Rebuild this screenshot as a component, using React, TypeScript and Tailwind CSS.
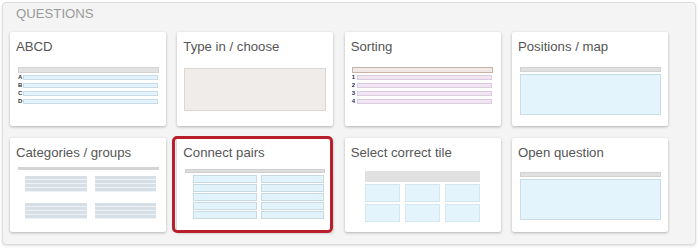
import React from "react";

const font = { fontFamily: '"Liberation Sans", Arial, sans-serif' };

function Card({ title, children, selected }: { title: string; children?: React.ReactNode; selected?: boolean }) {
  return (
    <div className="relative h-[94px] rounded-[2px] bg-white pt-[7px] shadow-[0_1px_3px_rgba(0,0,0,0.28)]">
      <div className="px-[6px] text-[13.2px] leading-[15px] text-[#555555]">{title}</div>
      {children}
      {selected && (
        <div className="pointer-events-none absolute -left-[5px] -top-[2px] right-0 -bottom-[1px] rounded-[5px] border-[3px] border-[#b81f2a]" />
      )}
    </div>
  );
}

function ListRows({ labels, fill, border, labelColor }: { labels: string[]; fill: string; border: string; labelColor: string }) {
  return (
    <div className="mt-[2px] flex flex-col gap-[3px]">
      {labels.map((l) => (
        <div key={l} className="flex h-[5px] items-center">
          <span className={`w-[5px] text-[6px] font-bold leading-[5px] ${labelColor}`}>{l}</span>
          <div className={`h-[5px] flex-1 mr-[1px] border ${fill} ${border}`} />
        </div>
      ))}
    </div>
  );
}

function Stripes() {
  return (
    <div className="flex flex-col gap-[1px] bg-[#eef2f5] pb-[1px]">
      <div className="h-[3px] bg-[#d5dfe5]" />
      <div className="h-[3px] bg-[#d5dfe5]" />
      <div className="h-[3px] bg-[#d5dfe5]" />
      <div className="h-[3px] bg-[#d5dfe5]" />
    </div>
  );
}

export default function App() {
  return (
    <div className="h-[249px] w-[700px] bg-white p-[2px]" style={font}>
      <div className="h-[243px] w-[694px] rounded-[4px] border border-[#dcdcdc] bg-[#f4f4f4] pl-[7px] pt-[3px] shadow-[0_1px_3px_rgba(0,0,0,0.12)]">
        <div className="pl-[6px] text-[13.2px] leading-[15px] text-[#9a9a9a]">QUESTIONS</div>
        <div className="mt-[11px] grid w-[658px] grid-cols-4 gap-x-[11.33px] gap-y-[12px]">
          <Card title="ABCD">
            <div className="ml-[8px] mt-[13px] w-[141px]">
              <div className="h-[6px] border border-[#d2d2d2] bg-[#e2e2e2]" />
              <ListRows labels={["A", "B", "C", "D"]} fill="bg-[#e4f2fb]" border="border-[#c6dceb]" labelColor="text-[#333333]" />
            </div>
          </Card>
          <Card title="Type in / choose">
            <div className="ml-[7px] mt-[14px] h-[43px] w-[142px] border border-[#dad7d4] bg-[#f0ece9]" />
          </Card>
          <Card title="Sorting">
            <div className="ml-[7px] mt-[13px] w-[141px]">
              <div className="h-[6px] border border-[#c9b3a8] bg-[#efe8e5]" />
              <ListRows labels={["1", "2", "3", "4"]} fill="bg-[#f1e5f3]" border="border-[#dccbe0]" labelColor="text-[#1e2a55]" />
            </div>
          </Card>
          <Card title="Positions / map">
            <div className="ml-[8px] mt-[13px] w-[141px]">
              <div className="h-[5px] border border-[#d2d2d2] bg-[#e0e0e0]" />
              <div className="mt-[2px] h-[41px] border border-[#c9dde8] bg-[#e4f4fc]" />
            </div>
          </Card>

          <Card title="Categories / groups">
            <div className="ml-[8px] mt-[7px] w-[141px]">
              <div className="h-[3px] bg-[#d4d4d4]" />
              <div className="mt-[6px] flex">
                <div className="ml-[7px] w-[62px]">
                  <Stripes />
                  <div className="mt-[11px]">
                    <Stripes />
                  </div>
                </div>
                <div className="ml-[8px] w-[61px]">
                  <Stripes />
                  <div className="mt-[11px]">
                    <Stripes />
                  </div>
                </div>
              </div>
            </div>
          </Card>
          <Card title="Connect pairs" selected>
            <div className="ml-[8px] mt-[9px] w-[140px]">
              <div className="h-[4px] border border-[#cfcfcf] bg-[#dcdcdc]" />
              <div className="mt-[2px] ml-[8px] grid grid-cols-[64px_63px] gap-x-[4px] gap-y-[1px]">
                {Array.from({ length: 10 }).map((_, i) => (
                  <div key={i} className="h-[8px] border border-[#c9d9e2] bg-[#e3f3fc]" />
                ))}
              </div>
            </div>
          </Card>
          <Card title="Select correct tile">
            <div className="ml-[20px] mt-[11px] w-[115px]">
              <div className="h-[11px] bg-[#e1e1e1]" />
              <div className="mt-[2px] grid grid-cols-3 gap-x-[5px] gap-y-[2px]">
                {Array.from({ length: 6 }).map((_, i) => (
                  <div key={i} className="h-[18px] border border-[#d4e6ee] bg-[#e3f4fd]" />
                ))}
              </div>
            </div>
          </Card>
          <Card title="Open question">
            <div className="ml-[8px] mt-[12px] w-[141px]">
              <div className="h-[5px] border border-[#d2d2d2] bg-[#e0e0e0]" />
              <div className="mt-[2px] h-[41px] border border-[#c9dde8] bg-[#e4f4fc]" />
            </div>
          </Card>
        </div>
      </div>
    </div>
  );
}
